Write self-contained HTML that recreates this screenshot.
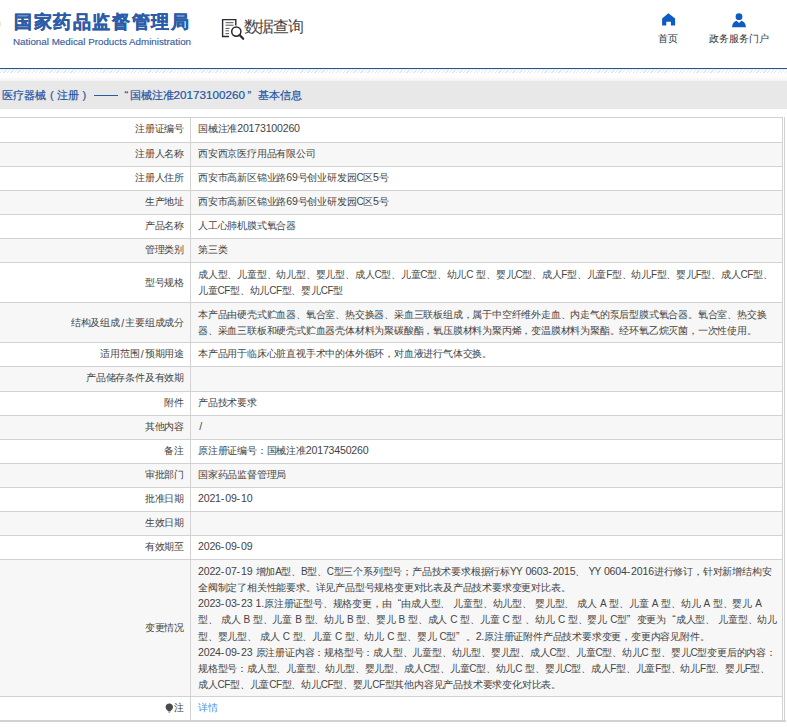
<!DOCTYPE html>
<html><head><meta charset="utf-8">
<style>
html,body { margin:0; padding:0; }
body { width:787px; height:727px; overflow:hidden; position:relative; background:#fff; font-family: "Liberation Sans", sans-serif; font-size:10.4px; color:#444; }
.d,.h,.l,.s { line-height:0; }
.d { font-size:10.6px; letter-spacing:-0.2px; }
.h { font-size:10.6px; letter-spacing:0.9px; }
.l { font-size:10px; letter-spacing:-0.5px; }
.s { font-size:10.6px; letter-spacing:0.2px; }
.abs { position:absolute; }
.logo-cn { position:absolute; left:14px; top:8.5px; font-size:18px; letter-spacing:1.6px; font-weight:bold; color:#2c5ca8; -webkit-text-stroke:0.35px #2c5ca8; white-space:nowrap; line-height:26px; }
.logo-en { position:absolute; left:13px; top:36px; font-family:"Liberation Sans",sans-serif; font-size:9.8px; color:#38609f; -webkit-text-stroke:0.15px #38609f; white-space:nowrap; line-height:12px; }
.emblem { position:absolute; left:-7px; top:20px; width:8px; height:8px; border-radius:50%; background:#f0e6cc; }
.dq { position:absolute; left:243.5px; top:17px; font-size:16px; letter-spacing:-1.3px; color:#444; white-space:nowrap; line-height:20px; }
.nav { position:absolute; font-size:10.4px; color:#333; white-space:nowrap; line-height:12px; }
.topline { position:absolute; left:0; top:68px; width:787px; height:1px; background:#2b5282; }
.hatch { position:absolute; left:0; top:69px; width:787px; height:4px; border-top:1px solid #e6f3f8; box-sizing:border-box; background: repeating-linear-gradient(135deg, #fff 0px, #fff 1.6px, #e2e6eb 1.6px, #e2e6eb 2.5px); }
.crumb { position:absolute; left:0; top:81px; width:787px; height:27.5px; background:#e8e8e9; }
.crumbtop { position:absolute; left:0; top:76px; width:787px; height:5px; background:linear-gradient(#fff,#f4f4f4); }
.crumb > span { position:absolute; top:7px; font-size:11px; color:#2456a3; -webkit-text-stroke:0.2px #2456a3; white-space:nowrap; line-height:14px; }
.dg { font-family:"Liberation Sans",sans-serif; font-size:11.7px; }
.row { position:absolute; left:-10px; width:792px; box-sizing:border-box; border-top:1px solid #d2d2d2; }
.lab { letter-spacing:-0.2px; position:absolute; left:0; width:201px; top:0; bottom:0; border-right:1px solid #d2d2d2; box-sizing:border-box; text-align:right; padding-right:6px; display:flex; align-items:center; justify-content:flex-end; white-space:nowrap; padding-bottom:2px; }
.sl { margin:0 1.3px; }
.ql,.qr { display:inline-block; width:9.8px; letter-spacing:0; }
.ql { text-align:right; } .qr { text-align:left; }
.val { position:absolute; left:208px; top:3.5px; line-height:16.1px; white-space:nowrap; letter-spacing:-0.2px; }
.link { color:#4a90e2; }
.bulb { vertical-align:-1px; margin-right:0.5px; }
.rb1 { position:absolute; left:782px; top:117px; width:1px; height:605px; background:#d2d2d2; }
.rb2 { position:absolute; left:784px; top:117px; width:1px; height:605px; background:#d2d2d2; }
.bb { position:absolute; left:0; top:720px; width:786px; height:2px; background:#d2d2d2; }
</style></head><body>
<div class="emblem"></div>
<div class="logo-cn">国家药品监督管理局</div>
<div class="logo-en">National Medical Products Administration</div>
<svg class="abs" style="left:220px;top:17px" width="26" height="25" viewBox="0 0 26 25">
 <path d="M9 19.5H2.6V2.6h13.2v6" fill="none" stroke="#2b2b33" stroke-width="1.4"/>
 <path d="M5.5 5.7h8M5.5 8.2h8M5.5 11.4h4M5.5 13.8h3.5M5.5 16.6h3.5" stroke="#555" stroke-width="1"/>
 <circle cx="16.3" cy="14.6" r="4.6" fill="none" stroke="#2b2b33" stroke-width="1.5"/>
 <path d="M19.6 18l3.6 3.8" stroke="#2b2b33" stroke-width="2.2" stroke-linecap="round"/>
</svg>
<div class="dq">数据查询</div>
<svg class="abs" style="left:661px;top:12px" width="15" height="15" viewBox="0 0 15 15">
 <path d="M7.4 1.3L1.1 6.5v7.1h4.2V9.8h4.6v3.8h4.2V6.5z" fill="#0f5bc4"/>
</svg>
<div class="nav" style="left:658px;top:33px">首页</div>
<svg class="abs" style="left:731px;top:11.5px" width="16" height="16" viewBox="0 0 16 16">
 <circle cx="8" cy="4.7" r="3.4" fill="#0f5bc4"/>
 <path d="M1 15.3C1.3 11.5 3.2 9.2 5.6 8.7L8 11l2.4-2.3c2.4 0.5 4.3 2.8 4.6 6.6z" fill="#0f5bc4"/>
</svg>
<div class="nav" style="left:709px;top:33px">政务服务门户</div>
<div class="topline"></div>
<div class="hatch"></div>
<div class="crumbtop"></div>
<div class="crumb">
<span style="left:2px">医疗器械</span>
<span style="left:50px;font-family:'Liberation Sans',sans-serif">(</span>
<span style="left:57px">注册</span>
<span style="left:82.5px;font-family:'Liberation Sans',sans-serif">)</span>
<div style="position:absolute;left:94px;top:13.5px;width:23.5px;height:1.2px;background:#2a5aa0"></div>
<span style="left:124.5px;font-family:'Liberation Sans',sans-serif">“</span>
<span style="left:129.5px">国械注准<span class="dg">20173100260</span></span>
<span style="left:247.5px;font-family:'Liberation Sans',sans-serif">”</span>
<span style="left:258px">基本信息</span>
</div>
<div class="row" style="top:117px;height:25px;background:#fff"><div class="lab">注册证编号</div><div class="val" style="top:3px">国械注准<span class="d">20173100260</span></div></div>
<div class="row" style="top:142px;height:24px;background:#f7f7f7"><div class="lab">注册人名称</div><div class="val" style="top:2.5px">西安西京医疗用品有限公司</div></div>
<div class="row" style="top:166px;height:24px;background:#fff"><div class="lab">注册人住所</div><div class="val" style="top:2.5px">西安市高新区锦业路<span class="d">69</span>号创业研发园<span class="l">C</span>区<span class="d">5</span>号</div></div>
<div class="row" style="top:190px;height:24px;background:#f7f7f7"><div class="lab">生产地址</div><div class="val" style="top:2.5px">西安市高新区锦业路<span class="d">69</span>号创业研发园<span class="l">C</span>区<span class="d">5</span>号</div></div>
<div class="row" style="top:214px;height:24px;background:#fff"><div class="lab">产品名称</div><div class="val" style="top:2.5px">人工心肺机膜式氧合器</div></div>
<div class="row" style="top:238px;height:24px;background:#f7f7f7"><div class="lab">管理类别</div><div class="val" style="top:2.5px">第三类</div></div>
<div class="row" style="top:262px;height:40px;background:#fff"><div class="lab" style="padding-bottom:0">型号规格</div><div class="val" style="top:3.8px">成人型、儿童型、幼儿型、婴儿型、成人<span class="l">C</span>型、儿童<span class="l">C</span>型、幼儿<span class="l">C</span><span class="s"> </span>型、婴儿<span class="l">C</span>型、成人<span class="l">F</span>型、儿童<span class="l">F</span>型、幼儿<span class="l">F</span>型、婴儿<span class="l">F</span>型、成人<span class="l">CF</span>型、<br>儿童<span class="l">CF</span>型、幼儿<span class="l">CF</span>型、婴儿<span class="l">CF</span>型</div></div>
<div class="row" style="top:302px;height:40px;background:#f7f7f7"><div class="lab" style="padding-bottom:0">结构及组成<span class="d sl">/</span>主要组成成分</div><div class="val" style="top:3.8px">本产品由硬壳式贮血器、氧合室、热交换器、采血三联板组成，属于中空纤维外走血、内走气的泵后型膜式氧合器。氧合室、热交换<br>器、采血三联板和硬壳式贮血器壳体材料为聚碳酸酯，氧压膜材料为聚丙烯，变温膜材料为聚酯。经环氧乙烷灭菌，一次性使用。</div></div>
<div class="row" style="top:342px;height:24px;background:#fff"><div class="lab">适用范围<span class="d sl">/</span>预期用途</div><div class="val" style="top:2.5px">本产品用于临床心脏直视手术中的体外循环，对血液进行气体交换。</div></div>
<div class="row" style="top:366px;height:25px;background:#f7f7f7"><div class="lab">产品储存条件及有效期</div><div class="val" style="top:2.5px"></div></div>
<div class="row" style="top:391px;height:24px;background:#fff"><div class="lab">附件</div><div class="val" style="top:2.5px">产品技术要求</div></div>
<div class="row" style="top:415px;height:24px;background:#f7f7f7"><div class="lab">其他内容</div><div class="val" style="top:2.5px"><span class="d sl">/</span></div></div>
<div class="row" style="top:439px;height:24px;background:#fff"><div class="lab">备注</div><div class="val" style="top:2.5px">原注册证编号：国械注准<span class="d">20173450260</span></div></div>
<div class="row" style="top:463px;height:24px;background:#f7f7f7"><div class="lab">审批部门</div><div class="val" style="top:2.5px">国家药品监督管理局</div></div>
<div class="row" style="top:487px;height:24px;background:#fff"><div class="lab">批准日期</div><div class="val" style="top:2.5px"><span class="d">2021</span><span class="h">-</span><span class="d">09</span><span class="h">-</span><span class="d">10</span></div></div>
<div class="row" style="top:511px;height:24px;background:#f7f7f7"><div class="lab">生效日期</div><div class="val" style="top:2.5px"></div></div>
<div class="row" style="top:535px;height:24px;background:#fff"><div class="lab">有效期至</div><div class="val" style="top:2.5px"><span class="d">2026</span><span class="h">-</span><span class="d">09</span><span class="h">-</span><span class="d">09</span></div></div>
<div class="row" style="top:559px;height:137px;background:#f7f7f7"><div class="lab" style="padding-bottom:0">变更情况</div><div class="val" style="top:4.2px"><span class="d">2022</span><span class="h">-</span><span class="d">07</span><span class="h">-</span><span class="d">19</span><span class="s"> </span>增加<span class="l">A</span>型、<span class="l">B</span>型、<span class="l">C</span>型三个系列型号；产品技术要求根据行标<span class="l">YY</span><span class="s"> </span><span class="d">0603</span><span class="h">-</span><span class="d">2015</span>、<span class="s"> </span><span class="l">YY</span><span class="s"> </span><span class="d">0604</span><span class="h">-</span><span class="d">2016</span>进行修订，针对新增结构安<br>全阀制定了相关性能要求。详见产品型号规格变更对比表及产品技术要求变更对比表。<br><span class="d">2023</span><span class="h">-</span><span class="d">03</span><span class="h">-</span><span class="d">23</span><span class="s"> </span><span class="d">1.</span>原注册证型号、规格变更，由<span class="ql">“</span>由成人型、<span class="s"> </span>儿童型、幼儿型、<span class="s"> </span>婴儿型、<span class="s"> </span>成人<span class="s"> </span><span class="l">A</span><span class="s"> </span>型、儿童<span class="s"> </span><span class="l">A</span><span class="s"> </span>型、幼儿<span class="s"> </span><span class="l">A</span><span class="s"> </span>型、婴儿<span class="s"> </span><span class="l">A</span><br>型、<span class="s"> </span>成人<span class="s"> </span><span class="l">B</span><span class="s"> </span>型、儿童<span class="s"> </span><span class="l">B</span><span class="s"> </span>型、幼儿<span class="s"> </span><span class="l">B</span><span class="s"> </span>型、婴儿<span class="s"> </span><span class="l">B</span><span class="s"> </span>型、成人<span class="s"> </span><span class="l">C</span><span class="s"> </span>型、儿童<span class="s"> </span><span class="l">C</span><span class="s"> </span>型<span class="s"> </span>、幼儿<span class="s"> </span><span class="l">C</span><span class="s"> </span>型、婴儿<span class="s"> </span><span class="l">C</span>型<span class="qr">”</span>变更为<span class="ql">“</span>成人型、<span class="s"> </span>儿童型、幼儿<br>型、婴儿型、<span class="s"> </span>成人<span class="s"> </span><span class="l">C</span><span class="s"> </span>型、儿童<span class="s"> </span><span class="l">C</span><span class="s"> </span>型、幼儿<span class="s"> </span><span class="l">C</span><span class="s"> </span>型、婴儿<span class="s"> </span><span class="l">C</span>型<span class="qr">”</span>。<span class="d">2.</span>原注册证附件产品技术要求变更，变更内容见附件。<br><span class="d">2024</span><span class="h">-</span><span class="d">09</span><span class="h">-</span><span class="d">23</span><span class="s"> </span>原注册证内容：规格型号：成人型、儿童型、幼儿型、婴儿型、成人<span class="l">C</span>型、儿童<span class="l">C</span>型、幼儿<span class="l">C</span><span class="s"> </span>型、婴儿<span class="l">C</span>型变更后的内容：<br>规格型号：成人型、儿童型、幼儿型、婴儿型、成人<span class="l">C</span>型、儿童<span class="l">C</span>型、幼儿<span class="l">C</span><span class="s"> </span>型、婴儿<span class="l">C</span>型、成人<span class="l">F</span>型、儿童<span class="l">F</span>型、幼儿<span class="l">F</span>型、婴儿<span class="l">F</span>型、<br>成人<span class="l">CF</span>型、儿童<span class="l">CF</span>型、幼儿<span class="l">CF</span>型、婴儿<span class="l">CF</span>型其他内容见产品技术要求变化对比表。</div></div>
<div class="row" style="top:696px;height:24px;background:#fff"><div class="lab"><svg class="bulb" width="9" height="10" viewBox="0 0 9 10"><path d="M4.3 0.4C2.2 0.4 0.6 1.9 0.6 3.9c0 1.4 0.7 2.3 1.5 3 0.5 0.4 0.8 0.9 0.9 1.4h2.6c0.1-0.5 0.4-1 0.9-1.4 0.8-0.7 1.5-1.6 1.5-3C8 1.9 6.4 0.4 4.3 0.4z" fill="#4a4a4a"/><path d="M3.2 8.6h2.3l-0.4 1.1H3.6z" fill="#888"/></svg>注</div><div class="val" style="top:3px"><span class="link">详情</span></div></div>
<div class="rb1"></div><div class="rb2"></div>
<div class="bb"></div>
</body></html>
